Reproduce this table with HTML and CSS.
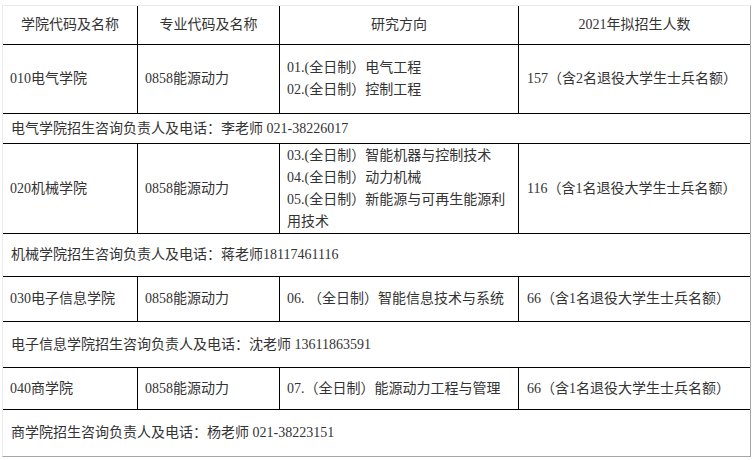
FILE: index.html
```html
<!DOCTYPE html>
<html lang="zh-CN">
<head>
<meta charset="utf-8">
<title>2021年拟招生人数</title>
<link rel="stylesheet" href="styles.css">
</head>
<body>
<div class="sheet">
  <div class="cell head r-head">学院代码及名称</div>
  <div class="cell head r-head">专业代码及名称</div>
  <div class="cell head r-head">研究方向</div>
  <div class="cell head r-head last">2021年拟招生人数</div>

  <div class="cell r1">010电气学院</div>
  <div class="cell r1">0858能源动力</div>
  <div class="cell r1 dirs"><div>01.(全日制）电气工程</div><div>02.(全日制）控制工程</div></div>
  <div class="cell r1 last">157（含2名退役大学生士兵名额）</div>
  <div class="cell contact c1">电气学院招生咨询负责人及电话：李老师 021-38226017</div>

  <div class="cell r2">020机械学院</div>
  <div class="cell r2">0858能源动力</div>
  <div class="cell r2 dirs"><div>03.(全日制）智能机器与控制技术</div><div>04.(全日制）动力机械</div><div>05.(全日制）新能源与可再生能源利用技术</div></div>
  <div class="cell r2 last">116（含1名退役大学生士兵名额）</div>
  <div class="cell contact c2">机械学院招生咨询负责人及电话：蒋老师18117461116</div>

  <div class="cell r3">030电子信息学院</div>
  <div class="cell r3">0858能源动力</div>
  <div class="cell r3 dirs">06. （全日制）智能信息技术与系统</div>
  <div class="cell r3 last">66（含1名退役大学生士兵名额）</div>
  <div class="cell contact c3">电子信息学院招生咨询负责人及电话：沈老师 13611863591</div>

  <div class="cell r4">040商学院</div>
  <div class="cell r4">0858能源动力</div>
  <div class="cell r4 dirs">07.（全日制）能源动力工程与管理</div>
  <div class="cell r4 last">66（含1名退役大学生士兵名额）</div>
  <div class="cell contact c4 end">商学院招生咨询负责人及电话：杨老师 021-38223151</div>
</div>
</body>
</html>
```
FILE: styles.css
```css
html, body {
  margin: 0;
  padding: 0;
  background: #ffffff;
}

body {
  font-family: "Liberation Serif", "Noto Sans CJK SC", sans-serif;
  font-size: 14px;
  line-height: 22px;
  color: #333333;
}

.sheet {
  margin: 5px 0 0 2px;
  width: 749px;
  box-sizing: border-box;
  border: 1px solid;
  border-color: #ebebeb #a6a6a6 #a6a6a6 #ebebeb;
  display: grid;
  grid-template-columns: 135px 142px 239px 231px;
  grid-template-rows: 39px 69px 30px 90px 43px 45px 46px 42px 46px;
}

.cell {
  box-sizing: border-box;
  border-right: 1px solid #000000;
  border-bottom: 1px solid #000000;
  padding: 0 7px;
  display: flex;
  align-items: center;
}

.cell.last {
  border-right: none;
  padding-left: 8px;
}

.head {
  justify-content: center;
  padding: 0;
}

.head.last {
  padding: 0;
}

.dirs {
  flex-direction: column;
  align-items: flex-start;
  justify-content: center;
}

.contact {
  grid-column: 1 / 5;
  border-right: none;
  padding-left: 8px;
}

.contact.end {
  border-bottom: none;
}
```
